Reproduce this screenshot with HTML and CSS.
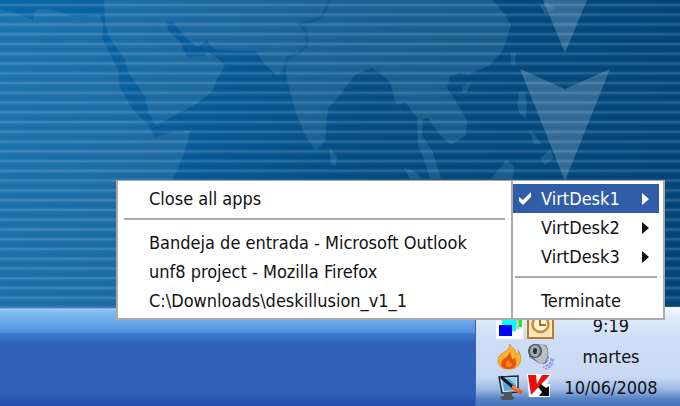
FILE: index.html
```html
<!DOCTYPE html>
<html lang="es">
<head>
	<meta charset="utf-8">
	<title>VirtDesk</title>
	<meta name="viewport" content="width=device-width, initial-scale=1.0">
	<link rel="stylesheet" href="styles.css">
</head>
<body>
	<main class="desktop">
		<svg class="wallpaper" viewBox="0 0 680 307" preserveAspectRatio="xMidYMin slice" aria-hidden="true">
			<defs>
				<linearGradient id="sea" x1="0" y1="0" x2="1" y2="0.1">
					<stop offset="0" stop-color="#0566a8"/>
					<stop offset="0.35" stop-color="#045694"/>
					<stop offset="0.6" stop-color="#004a80"/>
					<stop offset="1" stop-color="#004276"/>
				</linearGradient>
				<linearGradient id="line" x1="0" y1="0" x2="0" y2="1">
					<stop offset="0" stop-color="#fff" stop-opacity="0"/>
					<stop offset="0.3" stop-color="#fff" stop-opacity="0.02"/>
					<stop offset="0.5" stop-color="#fff" stop-opacity="0.2"/>
					<stop offset="0.7" stop-color="#fff" stop-opacity="0.04"/>
					<stop offset="1" stop-color="#fff" stop-opacity="0"/>
				</linearGradient>
				<pattern id="stripes" width="680" height="9.76" patternUnits="userSpaceOnUse">
					<rect width="680" height="9.76" fill="url(#line)"/>
				</pattern>
			</defs>
			<rect width="680" height="307" fill="url(#sea)"/>
			<g fill="#5a9cc0" fill-opacity="0.24">
				<!-- Africa -->
				<path d="M0 9L20 15L33 20L36 9L50 9L75 17L100 15L103 25L102 38L118 70L120 88L133 110L149 125L155 137L172 132L190 130L187 145L178 168L168 190L150 215L135 250L120 307H0Z"/>
				<!-- Arabia, India and Indochina -->
				<path d="M104 0L105 20L108 35L125 60L128 72L146 98L148 112L156 126L175 115L195 105L212 92L218 78L225 66L220 60L208 52L204 56L187 57L180 42L168 30L167 22L173 22L185 37L198 47L207 40L213 49L235 51L256 51L265 65L278 76L285 68L287 80L295 110L305 135L316 151L325 140L328 108L340 95L355 75L372 68L378 72L390 82L396 105L405 102L415 115L420 120L428 118L440 135L451 145L466 135L467 120L455 100L447 88L450 76L460 73L468 75L490 65L503 50L511 25L505 15L493 0Z"/>
				<path d="M417 118L423 120L422 135L433 152L441 179H430L426 165L418 145Z"/>
				<path d="M404 168L414 171L422 179H410Z"/>
				<path d="M491 179L500 168L506 160L514 166L513 179Z"/>
				<path d="M329 147L337 156L336 165L331 165Z"/>
				<path d="M463 86L471 82L467 92L462 93Z"/>
				<path d="M511 52L516 53L515 66L511 63Z"/>
				<path d="M519 92L525 91L527 104L526 118L520 114L517 104Z"/>
				<path d="M529 130L536 136L541 144L534 144ZM540 158L550 150L554 158L545 165Z"/>
				<path d="M540 5L547 2L556 9L545 14Z"/>
			</g>
			<path d="M330 0L322 17L312 21L300 24L306 32L307 45L298 54L287 58L284 72" fill="none" stroke="#00508c" stroke-width="3" stroke-opacity="0.5"/>
			<g fill="#7fa8c4" fill-opacity="0.36">
				<path d="M543 0H587L565 53Z"/>
				<path d="M520 69L565 89L610 69L565 181Z"/>
			</g>
			<rect width="680" height="307" fill="url(#stripes)"/>
		</svg>
	</main>

	<footer class="taskbar">
		<div class="tray">
			<div class="tray-icons">
				<svg class="icon" viewBox="0 0 27 27" role="img" aria-label="VirtDesk">
					<path fill="#fff" d="M0 0h27v27H0z"/>
					<path fill="#0f0" d="M17 3h9v12h-9z"/>
					<path fill="#c4c4c4" d="M14 6h9v11h-9z"/>
					<path fill="#0ff" d="M6 8h14v11H6z"/>
					<path fill="#00f" d="M3 13h13v11H3z"/>
				</svg>
				<svg class="icon" viewBox="0 0 27 27" role="img" aria-label="Outlook">
					<path fill="#fbe3ae" stroke="#c0762c" stroke-width="2" d="M1 1h25v25H1z"/>
					<path fill="none" stroke="#fff4d8" d="M3 3h21v21H3z"/>
					<circle cx="13.500" cy="12" r="8" fill="#fff5de" stroke="#c98b35" stroke-width="2.400"/>
					<path fill="none" stroke="#b06d20" stroke-width="2" d="M13 6v7h6"/>
				</svg>
				<svg class="icon" viewBox="0 0 27 27" role="img" aria-label="Avast">
					<path fill="#f9b62c" stroke="#d87a18" stroke-width=".7" d="M14 1C15 5 21 6 20 12c2-1 3-2 2-5 3 4 3 9 2 13-2 4-6 6-11 6C6 26 2 23 2 17 2 9 14 10 14 1Z"/>
					<path fill="#e85408" d="M13 9c1 5-8 6-8 12 0 3 4 5 8 5 5 0 8-3 7-7 0-2-1-3-1-5l-3 3c0-3-1-6-3-8Z"/>
					<path fill="#f98b1c" d="M12 17c-1 2-3 3-2 5 0 2 5 3 6 0 0-2-2-2-4-5Z"/>
				</svg>
				<svg class="icon" viewBox="0 0 27 27" role="img" aria-label="Volumen">
					<path fill="#74787f" d="M3 3l6-2 10 1c3 4 3 12 0 18l-6 1L2 14Z"/>
					<path fill="#b9bdc5" d="M12 2c7-1 10 4 8 12-1 4-3 7-7 7l-6-6Z"/>
					<ellipse cx="8" cy="8" rx="7" ry="7" fill="#50545c"/>
					<ellipse cx="8" cy="8" rx="5" ry="6" fill="#a3a8b2"/>
					<ellipse cx="8" cy="8" rx="2" ry="3" fill="#2b2e35"/>
					<path fill="none" stroke="#958fda" stroke-width="1.500" stroke-dasharray="3 1" d="M21 13c1 3-1 7-5 8M24 15c1 5-3 8-8 9M26 16c0 6-3 9-8 10"/>
				</svg>
				<svg class="icon" viewBox="0 0 27 27" role="img" aria-label="Pantalla">
					<path fill="#dce2e6" stroke="#252a30" stroke-width="1.500" d="M3 3l19-1v16l-16 1Z"/>
					<path fill="#54a8e4" d="M6 5l14-1v12L8 17Z"/>
					<path fill="#92d1f5" d="M12 4l8-1v8Z"/>
					<path fill="#4c535b" d="M8 18h8v4l3 2-3 2H6l-2-3 4-1Z"/>
					<path stroke="#17191c" stroke-width="3" d="M5 3l12 10"/>
					<path stroke="#e65e18" stroke-width="4" d="M16 13l10 6"/>
					<path stroke="#ffb078" d="M16 12l7 4"/>
				</svg>
				<svg class="icon" viewBox="0 0 27 27" role="img" aria-label="Kaspersky">
					<path fill="#fff" d="M0 0h24l-4 10h3v13H12L2 23Z"/>
					<path fill="#f00b0b" d="M1 1h8l1 9 5-9h8L4 21Z"/>
					<path fill="#080808" d="M11 13l3-3 5 4 3-2v10H12l3-4Z"/>
				</svg>
			</div>
			<div class="clock">
				<span>9:19</span>
				<span>martes</span>
				<span>10/06/2008</span>
			</div>
		</div>
	</footer>

	<div class="menus">
		<div class="menu submenu" role="menu">
			<button class="item" role="menuitem">Close all apps</button>
			<hr>
			<button class="item" role="menuitem">Bandeja de entrada - Microsoft Outlook</button>
			<button class="item" role="menuitem">unf8 project - Mozilla Firefox</button>
			<button class="item" role="menuitem">C:\Downloads\deskillusion_v1_1</button>
		</div>
		<div class="menu" role="menu">
			<button class="item selected" role="menuitemcheckbox" aria-checked="true">
				<svg class="check" viewBox="0 0 13 13" aria-hidden="true"><path d="M0 5l4 3 8-8v5l-8 8-4-4Z"/></svg>
				<span>VirtDesk1</span>
				<svg class="arrow" viewBox="0 0 7 12" aria-hidden="true"><path d="M0 0l7 6-7 6Z"/></svg>
			</button>
			<button class="item" role="menuitem">
				<span>VirtDesk2</span>
				<svg class="arrow" viewBox="0 0 7 12" aria-hidden="true"><path d="M0 0l7 6-7 6Z"/></svg>
			</button>
			<button class="item" role="menuitem">
				<span>VirtDesk3</span>
				<svg class="arrow" viewBox="0 0 7 12" aria-hidden="true"><path d="M0 0l7 6-7 6Z"/></svg>
			</button>
			<hr>
			<button class="item" role="menuitem">Terminate</button>
		</div>
	</div>
</body>
</html>
```

FILE: styles.css
```css
html, body {
	margin: 0;
	padding: 0;
	height: 100%;
}

body {
	display: flex;
	flex-direction: column;
	position: relative;
	overflow: hidden;
	color: #111;
	font-family: Tahoma, "DejaVu Sans Condensed", "Noto Sans", sans-serif;
	font-size: 18px;
	line-height: 29px;
}

.desktop {
	flex: 1;
	min-height: 0;
	background: #004a80;
}

.wallpaper {
	display: block;
	width: 100%;
	height: 100%;
}

.taskbar {
	display: flex;
	justify-content: flex-end;
	background: linear-gradient(#2a50b4 0, #9cccf6 2px, #80bcf0 5px, #5893e0 24px, #5590dd 25px, #3a7acc 27px, #3060ba 37px, #3060ba 85px, #284eac 100%);
}

.tray {
	display: flex;
	gap: 4px;
	padding: 3px 16px 3px 20px;
	border-left: 1px solid #3766ba;
	background: linear-gradient(#f4f9ff 0, #e2edfb 8px, #cfdef6 30px, #c8d9f4 70px, #9dbae4 82px, #5582c4 92px, #4674b8 100%);
}

.tray-icons {
	display: grid;
	grid-template-columns: 27px 27px;
	grid-auto-rows: 31px;
	column-gap: 4px;
	align-items: center;
}

.icon {
	width: 27px;
	height: 27px;
}

.clock {
	display: flex;
	flex-direction: column;
	width: 106px;
	line-height: 31px;
	text-align: center;
}

/* open menus, over the desktop and the taskbar */
.menus {
	display: flex;
	position: absolute;
	right: 15px;
	bottom: 86px;
}

.menu {
	box-sizing: border-box;
	width: 153px;
	padding: 3px 4px 3px 0;
	border: 1px solid #aca9a6;
	border-width: 1px 2px 2px 1px;
	background: #fff;
}

.submenu {
	width: 396px;
	padding: 3px 4px;
	border-width: 1px 1px 2px 2px;
}

.item {
	display: flex;
	align-items: center;
	position: relative;
	width: 100%;
	height: 29px;
	padding: 0 10px 0 28px;
	border: none;
	background: none;
	color: inherit;
	font: inherit;
	white-space: nowrap;
}

.submenu .item {
	padding-left: 27px;
}

.selected,
.item:hover {
	background: #315da8;
	color: #fff;
}

.check {
	position: absolute;
	left: 6px;
	width: 13px;
	height: 13px;
	fill: currentColor;
}

.arrow {
	width: 7px;
	height: 12px;
	margin-left: auto;
	fill: currentColor;
}

hr {
	height: 2px;
	margin: 5px 2px 8px;
	border: none;
	background: #aaa;
}
```
